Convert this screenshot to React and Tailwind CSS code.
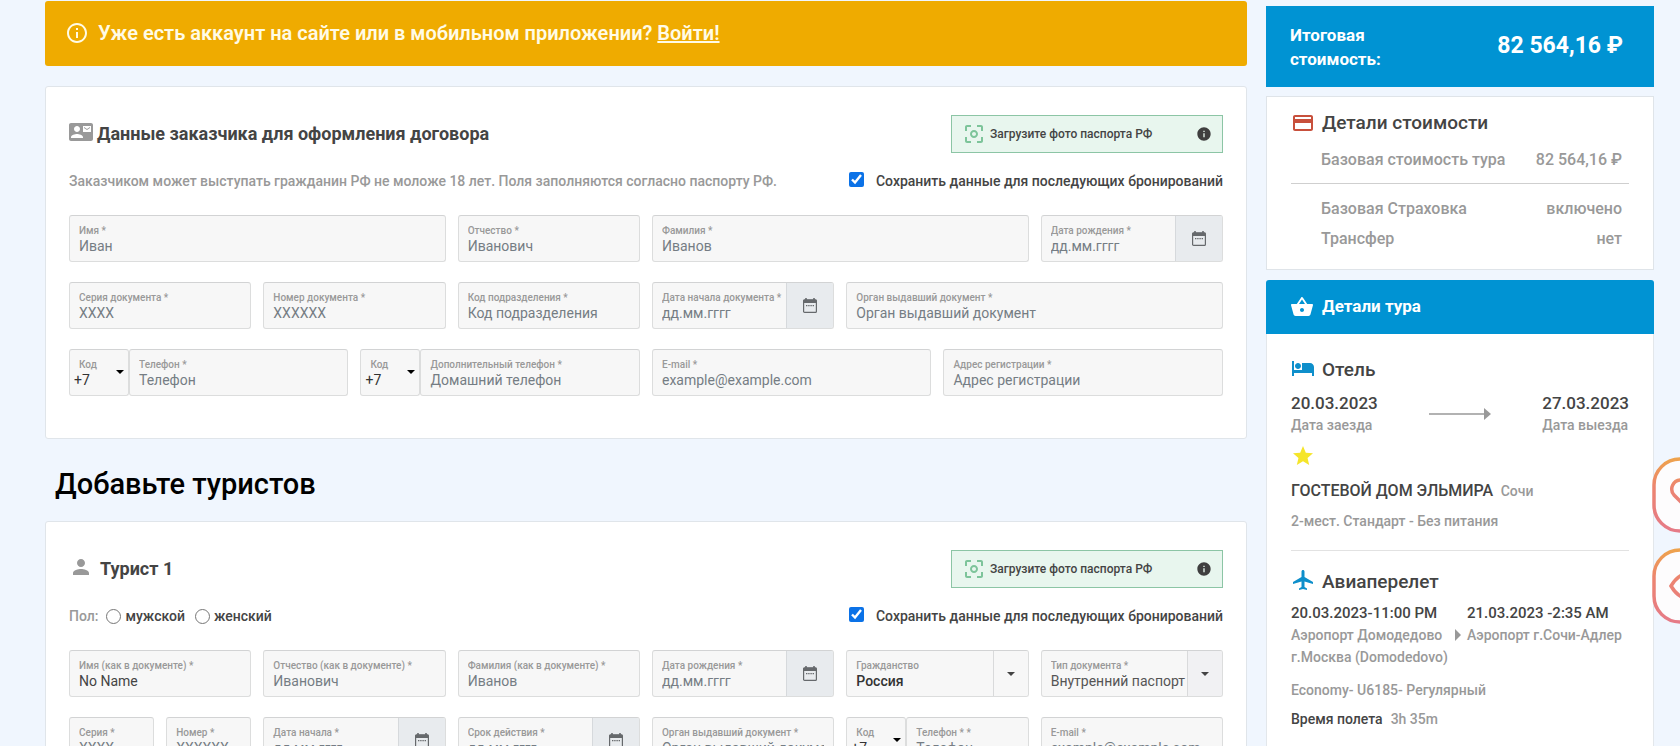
import React from 'react';
import {
  MdCenterFocusWeak,
  MdContactMail,
  MdCreditCard,
  MdHotel,
  MdInfo,
  MdInfoOutline,
  MdLocalAirport,
  MdPerson,
  MdShoppingBasket,
  MdStar,
} from 'react-icons/md';

const fieldBox = 'h-[47px] min-w-0 rounded-[3px] border border-[#dcdddd] border-t-[#d2d3d4] bg-[#f7f7f7]';
const inputText = 'block w-full min-w-0 bg-transparent text-sm leading-5 text-[#444] outline-none placeholder:text-[#757d84]';

const spans = {
  1: 'col-span-1',
  2: 'col-span-2',
  3: 'col-span-3',
  4: 'col-span-4',
};

const FieldLabel = ({ children }) => (
  <span className="block truncate text-[10px] leading-[11px] font-medium text-[#999]">{children}</span>
);

const TextField = ({ label, placeholder, value, span = 2 }) => (
  <label className={`${fieldBox} ${spans[span]} block px-[9px] pt-[9px]`}>
    <FieldLabel>{label}</FieldLabel>
    <input type="text" placeholder={placeholder} defaultValue={value} className={inputText} />
  </label>
);

const CalendarIcon = () => (
  <svg viewBox="0 0 14 15" className="h-[15px] w-[14px]" fill="none" stroke="#66696c">
    <rect x="0.6" y="1.8" width="12.8" height="12.6" rx="1" strokeWidth="1.2" />
    <path d="M0.6 3.4h12.8" strokeWidth="3.4" />
    <path d="M3 0v2M11 0v2" strokeWidth="1.6" />
    <path d="M3 7.6h8" strokeWidth="1.2" strokeDasharray="1.4 0.8" />
  </svg>
);

const DateField = ({ label, span = 2 }) => (
  <div className={`${fieldBox} ${spans[span]} flex overflow-hidden`}>
    <label className="block min-w-0 flex-1 pt-[9px] pl-[9px]">
      <FieldLabel>{label}</FieldLabel>
      <input type="text" placeholder="дд.мм.гггг" className={inputText} />
    </label>
    <button
      type="button"
      aria-label="Календарь"
      className="flex w-[47px] shrink-0 items-center justify-center border-l border-[#d6d9dc] bg-[#e8ebee]"
    >
      <CalendarIcon />
    </button>
  </div>
);

const Caret = ({ className = '' }) => (
  <svg viewBox="0 0 8 4" className={`h-1 w-2 ${className}`}>
    <path d="M0 0h8L4 4z" fill="currentColor" />
  </svg>
);

const PhoneField = ({ label, placeholder, span = 3 }) => (
  <div className={`${spans[span]} flex min-w-0`}>
    <label className={`${fieldBox} relative block w-[60px] shrink-0 pt-[9px]`}>
      <span className="block pl-[9px] text-[10px] leading-[11px] font-medium text-[#999]">Код</span>
      <select className="block w-full appearance-none bg-transparent pl-1 text-sm leading-5 text-[#333] outline-none">
        <option>+7</option>
      </select>
      <Caret className="pointer-events-none absolute top-5 right-1 text-black" />
    </label>
    <label className={`${fieldBox} block flex-1 px-[9px] pt-[9px]`}>
      <FieldLabel>{label}</FieldLabel>
      <input type="tel" placeholder={placeholder} className={inputText} />
    </label>
  </div>
);

const SelectField = ({ label, value, bold, shaded }) => (
  <label className={`${fieldBox} col-span-2 relative block overflow-hidden pt-[9px] pl-[9px]`}>
    <FieldLabel>{label}</FieldLabel>
    <select
      className={`block w-full appearance-none bg-transparent pr-9 text-sm leading-5 outline-none ${
        bold ? 'font-medium text-[#333]' : 'text-[#555]'
      }`}
    >
      <option>{value}</option>
    </select>
    <span
      className={`pointer-events-none absolute inset-y-0 right-0 flex w-[35px] items-center justify-center border-l border-[#d9dadb] text-[#444] ${
        shaded ? 'bg-[#f1f1f3]' : 'bg-[#f7f7f7]'
      }`}
    >
      <Caret />
    </span>
  </label>
);

const UploadButton = () => (
  <button
    type="button"
    className="flex h-[38px] w-[272px] items-center border border-[#8cc5a5] bg-[#e8f6ee] px-2.5 text-xs font-medium text-[#444]"
  >
    <MdCenterFocusWeak className="size-6 text-[#7dc49a]" />
    <span className="ml-1 flex-1 text-left">Загрузите фото паспорта РФ</span>
    <MdInfo className="size-4 text-[#3f3f3f]" />
  </button>
);

const SaveCheckbox = () => (
  <label className="flex items-center text-sm font-medium text-[#444]">
    <input type="checkbox" defaultChecked className="mr-3 mb-1 size-[15px] accent-[#0b72e7]" />
    Сохранить данные для последующих бронирований
  </label>
);

const Card = ({ icon, title, note, children }) => (
  <section className="rounded-[3px] border border-[#e0e5ea] bg-white px-[23px] pt-7 pb-[42px]">
    <div className="flex h-[38px] items-center justify-between">
      <h2 className="flex items-center text-lg font-bold text-[#444]">
        {icon}
        {title}
      </h2>
      <UploadButton />
    </div>
    <div className="mt-4 flex h-6 items-center justify-between text-sm font-medium text-[#999]">
      {note}
      <SaveCheckbox />
    </div>
    <div className="mt-[22px] grid grid-cols-12 gap-x-3 gap-y-5">{children}</div>
  </section>
);

const PriceRow = ({ name, value }) => (
  <div className="flex justify-between pr-[7px] pl-[30px]">
    <dt>{name}</dt>
    <dd>{value}</dd>
  </div>
);

const PriceDetails = () => (
  <section className="mt-[9px] border border-[#dfe4e9] bg-white px-6 pt-3.5 pb-[15px]">
    <h3 className="flex h-6 items-center text-[19px] font-medium text-[#444]">
      <MdCreditCard className="mr-[7px] size-6 text-[#c8503c]" />
      Детали стоимости
    </h3>
    <dl className="mt-2.5 text-base leading-[30px] font-medium text-[#999]">
      <PriceRow name="Базовая стоимость тура" value="82 564,16 ₽" />
      <div className="mt-2 mb-2.5 border-t border-[#cfcfcf]" />
      <PriceRow name="Базовая Страховка" value="включено" />
      <PriceRow name="Трансфер" value="нет" />
    </dl>
  </section>
);

const TourDetails = () => (
  <section className="mt-2.5 flex-1">
    <h3 className="flex h-[54px] items-center rounded-t-[3px] bg-[#0093d3] px-6 text-[17px] font-bold text-white">
      <MdShoppingBasket className="mr-2 size-6" />
      Детали тура
    </h3>
    <div className="border-x border-[#e3e7eb] bg-white px-6 pt-6 pb-10 text-sm font-medium text-[#999]">
      <h4 className="flex h-6 items-center text-[19px] text-[#444]">
        <MdHotel className="mr-[7px] mb-1 size-6 text-[#0e8fcb]" />
        Отель
      </h4>
      <div className="mt-2.5 flex items-center justify-between">
        <div>
          <p className="text-[17px] leading-[22px] text-[#444]">20.03.2023</p>
          <p className="leading-[22px]">Дата заезда</p>
        </div>
        <svg viewBox="0 0 62 12" className="h-3 w-[62px]">
          <path d="M0 6h56" stroke="#999" strokeWidth="1.5" />
          <path d="M55 0l7 6-7 6z" fill="#999" />
        </svg>
        <div>
          <p className="text-[17px] leading-[22px] text-[#444]">27.03.2023</p>
          <p className="leading-[22px]">Дата выезда</p>
        </div>
      </div>
      <MdStar className="mt-2 size-6 text-[#f5e52a]" />
      <p className="mt-[11px] leading-6">
        <span className="mr-1 text-base text-[#444]">ГОСТЕВОЙ ДОМ ЭЛЬМИРА</span> Сочи
      </p>
      <p className="mt-[7px] leading-[22px]">2-мест. Стандарт - Без питания</p>
      <div className="mt-[18px] mb-[19px] border-t border-[#e2e2e2]" />
      <h4 className="flex h-6 items-center text-[19px] text-[#444]">
        <MdLocalAirport className="mr-[7px] mb-1 size-6 text-[#0e8fcb]" />
        Авиаперелет
      </h4>
      <div className="mt-2 flex leading-[22px]">
        <div className="w-[164px]">
          <p className="text-[15px] text-[#444]">20.03.2023-11:00 PM</p>
          <p>Аэропорт Домодедово</p>
          <p>г.Москва (Domodedovo)</p>
        </div>
        <svg viewBox="0 0 6 12" className="mt-[27px] mr-1.5 h-3 w-1.5">
          <path d="M0 0l6 6-6 6z" fill="#999" />
        </svg>
        <div>
          <p className="text-[15px] text-[#444]">21.03.2023 -2:35 AM</p>
          <p>Аэропорт г.Сочи-Адлер</p>
        </div>
      </div>
      <p className="mt-[11px] leading-[22px]">Economy- U6185- Регулярный</p>
      <p className="mt-[7px] leading-[22px]">
        <span className="mr-2 text-[#444]">Время полета</span>3h 35m
      </p>
    </div>
  </section>
);

const FloatingButton = ({ label, children }) => (
  <button type="button" aria-label={label} className="block size-[76px]">
    <svg viewBox="0 0 76 76" className="size-[76px]" fill="none" stroke="url(#warm)" strokeWidth="3.5">
      <defs>
        <linearGradient id="warm" x1="0" y1="0" x2="0" y2="76" gradientUnits="userSpaceOnUse">
          <stop offset="0" stopColor="#eea44b" />
          <stop offset="0.4" stopColor="#ec8470" />
          <stop offset="1" stopColor="#e57a88" />
        </linearGradient>
      </defs>
      <rect x="2" y="2" width="72" height="72" rx="26" fill="#fdfcfd" />
      {children}
    </svg>
  </button>
);

const App = () => {
  return (
    <div className="relative h-screen overflow-hidden bg-[#f0f6fe] font-['Roboto',sans-serif]">
      <div className="flex gap-[19px] pr-[26px] pl-[45px]">
        <main className="min-w-0 flex-1 pt-px">
          <div className="flex h-[65px] items-center rounded-[3px] bg-[#efab00] px-5 pb-0.5 text-xl font-semibold text-[#fffbe6]">
            <MdInfoOutline className="mr-[9px] size-6" />
            <p>
              Уже есть аккаунт на сайте или в мобильном приложении?{' '}
              <a href="#login" className="underline">
                Войти!
              </a>
            </p>
          </div>

          <div className="mt-5">
            <Card
              icon={<MdContactMail className="mr-1 mb-1 size-6 text-[#999]" />}
              title="Данные заказчика для оформления договора"
              note={<p>Заказчиком может выступать гражданин РФ не моложе 18 лет. Поля заполняются согласно паспорту РФ.</p>}
            >
              <TextField label="Имя *" placeholder="Иван" span={4} />
              <TextField label="Отчество *" placeholder="Иванович" />
              <TextField label="Фамилия *" placeholder="Иванов" span={4} />
              <DateField label="Дата рождения *" />

              <TextField label="Серия документа *" placeholder="XXXX" />
              <TextField label="Номер документа *" placeholder="XXXXXX" />
              <TextField label="Код подразделения *" placeholder="Код подразделения" />
              <DateField label="Дата начала документа *" />
              <TextField label="Орган выдавший документ *" placeholder="Орган выдавший документ" span={4} />

              <PhoneField label="Телефон *" placeholder="Телефон" />
              <PhoneField label="Дополнительный телефон *" placeholder="Домашний телефон" />
              <TextField label="E-mail *" placeholder="example@example.com" span={3} />
              <TextField label="Адрес регистрации *" placeholder="Адрес регистрации" span={3} />
            </Card>
          </div>

          <h1 className="flex h-[82px] items-center pt-2.5 pl-2.5 text-[29px] font-medium text-black">Добавьте туристов</h1>

          <Card
            icon={<MdPerson className="mr-[7px] mb-1 size-6 text-[#999]" />}
            title="Турист 1"
            note={
              <fieldset className="flex items-center">
                <legend className="float-left mr-2">Пол:</legend>
                <label className="flex items-center text-[#444]">
                  <input type="radio" name="gender" className="mr-1 size-[15px]" />
                  мужской
                </label>
                <label className="ml-2.5 flex items-center text-[#444]">
                  <input type="radio" name="gender" className="mr-1 size-[15px]" />
                  женский
                </label>
              </fieldset>
            }
          >
            <TextField label="Имя (как в документе) *" placeholder="Иван" value="No Name" />
            <TextField label="Отчество (как в документе) *" placeholder="Иванович" />
            <TextField label="Фамилия (как в документе) *" placeholder="Иванов" />
            <DateField label="Дата рождения *" />
            <SelectField label="Гражданство" value="Россия" bold />
            <SelectField label="Тип документа *" value="Внутренний паспорт" shaded />

            <TextField label="Серия *" placeholder="XXXX" span={1} />
            <TextField label="Номер *" placeholder="XXXXXX" span={1} />
            <DateField label="Дата начала *" />
            <DateField label="Срок действия *" />
            <TextField label="Орган выдавший документ *" placeholder="Орган выдавший документ" />
            <PhoneField label="Телефон * *" placeholder="Телефон" span={2} />
            <TextField label="E-mail *" placeholder="example@example.com" />
          </Card>
        </main>

        <aside className="flex w-[388px] shrink-0 flex-col pt-1.5">
          <div className="flex h-[81px] items-center justify-between bg-[#0093d3] pr-[31px] pl-6 font-bold text-white">
            <p className="w-32 text-[17px] leading-6">Итоговая стоимость:</p>
            <p className="text-[23px]">82 564,16 ₽</p>
          </div>
          <PriceDetails />
          <TourDetails />
        </aside>
      </div>

      <div className="absolute top-[457px] -right-12 flex flex-col gap-[15px]">
        <FloatingButton label="Избранное">
          <path d="M38 54L22 38c-5-6-1-15 7-15 4 0 7 2 9 6 2-4 5-6 9-6 8 0 12 9 7 15z" />
        </FloatingButton>
        <FloatingButton label="Просмотренное">
          <path d="M19 38c10-17 28-17 38 0-10 17-28 17-38 0z" />
          <circle cx="38" cy="38" r="6" />
        </FloatingButton>
      </div>
    </div>
  );
};

export default App;
